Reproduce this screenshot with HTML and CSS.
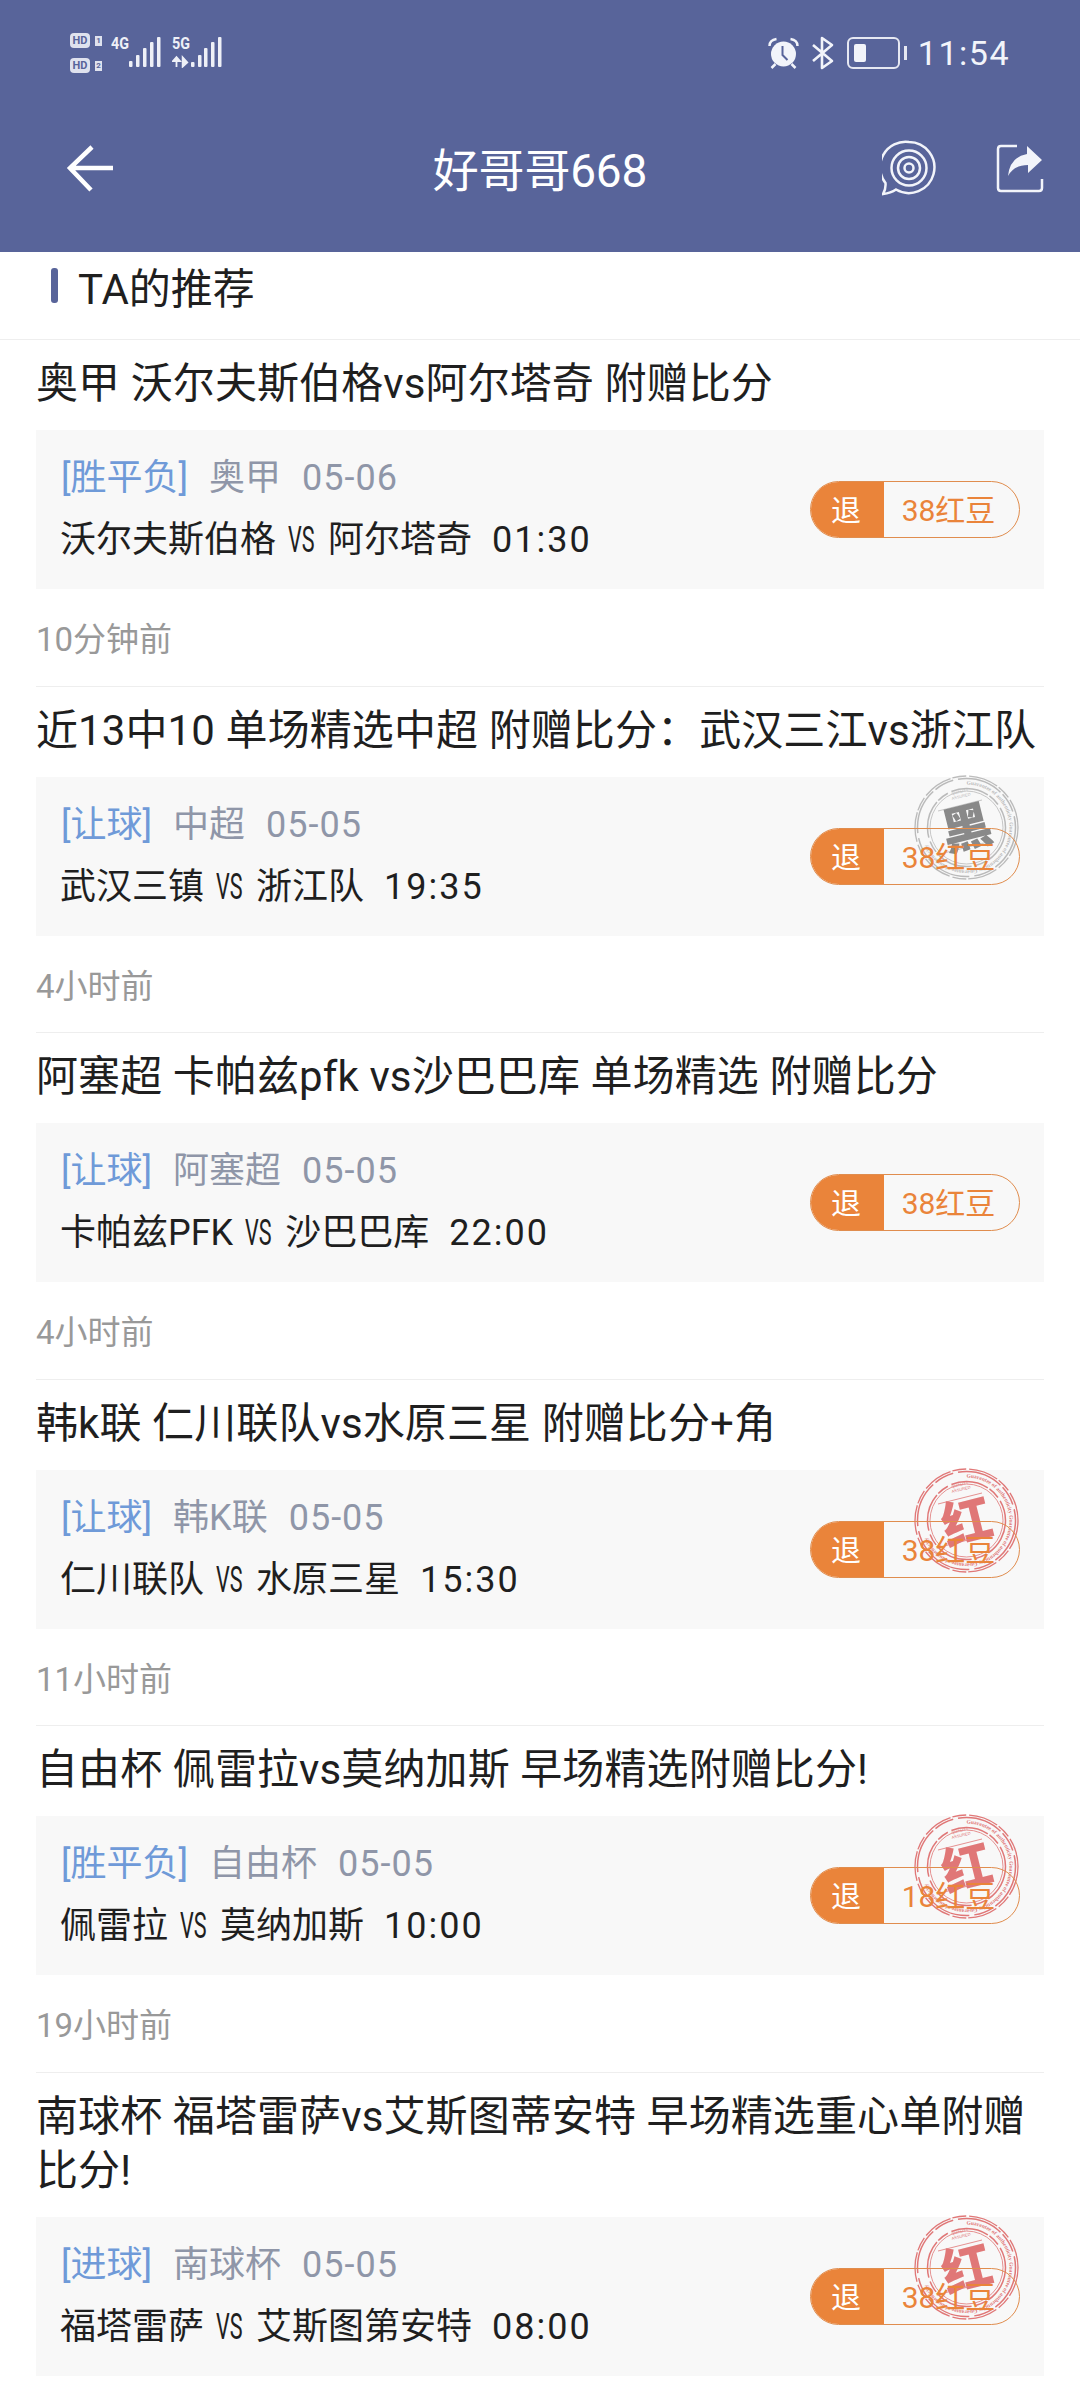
FILE: index.html
```html
<!DOCTYPE html>
<html>
<head>
  <meta charset="UTF-8">
  <title>好哥哥668</title>
  <link rel="stylesheet" href="styles.css">
</head>
<body>
  <!-- Shared stamp artwork -->
  <svg class="defs" width="0" height="0">
    <defs>
      <path id="ring-path" d="M52.500 9.500a43 43 0 1 1-.01 0"/>
      <symbol id="stamp-ring" viewBox="0 0 105 105">
        <g fill="none" stroke="currentColor">
          <circle cx="52.500" cy="52.500" r="51.500" stroke-width="1.300" stroke-dasharray="30 2 14 3"/>
          <circle cx="52.500" cy="52.500" r="49" stroke-width="1.500" stroke-dasharray="46 3 20 5"/>
          <circle cx="52.500" cy="52.500" r="39" stroke-width="1.500" stroke-dasharray="38 2 12 4"/>
          <circle cx="52.500" cy="52.500" r="36.500" stroke-width=".8"/>
          <path d="M24 36l44-11M30 78l44-11" stroke-width=".8"/>
        </g>
        <text class="stamp-ring-text"><textPath href="#ring-path">Guarantee of authenticity  Guarantee of authenticity  Guarantee of authenticity</textPath></text>
        <text class="stamp-small" x="38" y="20" transform="rotate(-14 38 20)">QUALITY</text>
        <text class="stamp-small" x="38" y="25" transform="rotate(-14 38 25)">ASSURED</text>
      </symbol>
    </defs>
  </svg>

  <header class="top">
    <div class="status-bar">
      <div class="status-left">
        <div class="sims">
          <div class="sim"><span class="hd">HD</span><span class="sim-no">1</span></div>
          <div class="sim"><span class="hd">HD</span><span class="sim-no">2</span></div>
        </div>
        <svg width="50" height="35" viewBox="0 0 50 35">
          <text class="net" x="0" y="16" textLength="18" lengthAdjust="spacingAndGlyphs">4G</text>
          <g fill="#eef0f7">
            <rect x="18" y="28" width="3.500" height="6" rx="1"/>
            <rect x="25" y="22" width="3.500" height="12" rx="1"/>
            <rect x="32" y="15" width="3.500" height="19" rx="1"/>
            <rect x="39" y="9" width="3.500" height="25" rx="1"/>
            <rect x="46" y="4" width="3.500" height="30" rx="1"/>
          </g>
        </svg>
        <svg width="50" height="35" viewBox="0 0 50 35">
          <text class="net" x="0" y="16" textLength="18" lengthAdjust="spacingAndGlyphs">5G</text>
          <path d="M4.500 24v10M1 28l3.500-4 3.500 4z" stroke="#eef0f7" stroke-width="1.800" fill="#eef0f7"/>
          <path d="M10.500 24v10l5-4.500z" stroke="#eef0f7" stroke-width="1.500" fill="#eef0f7"/>
          <g fill="#eef0f7">
            <rect x="19" y="29" width="3.500" height="5" rx="1"/>
            <rect x="26" y="22" width="3.500" height="12" rx="1"/>
            <rect x="32" y="15" width="3.500" height="19" rx="1"/>
            <rect x="39" y="9" width="3.500" height="25" rx="1"/>
            <rect x="46" y="4" width="3.500" height="30" rx="1"/>
          </g>
        </svg>
      </div>
      <div class="status-right">
        <svg width="31" height="32" viewBox="0 0 30 32">
          <circle cx="15" cy="17" r="12.500" fill="#f2f4fa"/>
          <path d="M14 9v9l5 5" fill="none" stroke="#58649a" stroke-width="2"/>
          <path d="M1 9q0-6 7-7M29 9q0-6-7-7" fill="none" stroke="#f2f4fa" stroke-width="2.500"/>
          <path d="M7 27l-4 4M23 27l4 4" stroke="#f2f4fa" stroke-width="2.500"/>
        </svg>
        <svg class="bt" width="24" height="34" viewBox="0 0 24 34">
          <path d="M2 9l19 16-10 7V2l10 7L2 25" fill="none" stroke="#f2f4fa" stroke-width="2.600" stroke-linejoin="round"/>
        </svg>
        <div class="battery"><span class="battery-level"></span></div>
        <span class="clock">11:54</span>
      </div>
    </div>
    <nav class="nav">
      <svg width="48" height="48" viewBox="0 0 48 48">
        <path d="M47 24H5M26 3L4 24l21 22" fill="none" stroke="#fff" stroke-width="4.500"/>
      </svg>
      <h1 class="nav-title">好哥哥668</h1>
      <div class="nav-actions">
        <svg width="54" height="56" viewBox="0 0 54 56">
          <path d="M27 2a25.500 25.500 0 1 1-13 47.500Q9 53 1 54q3-5 2.500-11A25.500 25.500 0 0 1 27 2z" fill="none" stroke="#f2f4fa" stroke-width="2.500"/>
          <circle cx="27" cy="28" r="17.500" fill="none" stroke="#f2f4fa" stroke-width="2.500"/>
          <circle cx="27" cy="28" r="11" fill="none" stroke="#f2f4fa" stroke-width="2.500"/>
          <circle cx="27" cy="28" r="4.500" fill="none" stroke="#f2f4fa" stroke-width="2.500"/>
        </svg>
        <svg width="48" height="50" viewBox="0 0 48 50">
          <path d="M11 3H5Q2 3 2 6v39q0 3 3 3h38q3 0 3-3v-9M11 3h10" fill="none" stroke="#f2f4fa" stroke-width="2.500"/>
          <path d="M31 3l15 14-14 13v-8q-14 0-20 11 2-19 19-22z" fill="#f2f4fa"/>
        </svg>
      </div>
    </nav>
  </header>

  <section class="section-head">
    <span class="section-mark"></span>
    <h2 class="section-title">TA的推荐</h2>
  </section>

  <div class="list">
    <div class="item">
      <h3 class="item-title">奥甲 沃尔夫斯伯格vs阿尔塔奇 附赠比分</h3>
      <div class="card">
        <div class="card-info">
          <div class="meta"><span class="play">[胜平负]</span><span>奥甲</span><span class="date">05-06</span></div>
          <div class="match"><span>沃尔夫斯伯格</span><span class="vs">VS</span><span>阿尔塔奇</span><span class="kick">01:30</span></div>
        </div>
        <div class="price"><span class="refund">退</span><span class="beans">38红豆</span></div>
      </div>
      <div class="time">10分钟前</div>
    </div>

    <div class="item">
      <h3 class="item-title">近13中10 单场精选中超 附赠比分：武汉三江vs浙江队</h3>
      <div class="card">
        <div class="card-info">
          <div class="meta"><span class="play">[让球]</span><span>中超</span><span class="date">05-05</span></div>
          <div class="match"><span>武汉三镇</span><span class="vs">VS</span><span>浙江队</span><span class="kick">19:35</span></div>
        </div>
        <svg class="stamp stamp-black" width="105" height="105" viewBox="0 0 105 105">
          <use href="#stamp-ring"/>
          <text class="stamp-char" x="52.500" y="71" transform="rotate(-14 52.500 52.500)">黑</text>
        </svg>
        <div class="price"><span class="refund">退</span><span class="beans">38红豆</span></div>
      </div>
      <div class="time">4小时前</div>
    </div>

    <div class="item">
      <h3 class="item-title">阿塞超 卡帕兹pfk vs沙巴巴库 单场精选 附赠比分</h3>
      <div class="card">
        <div class="card-info">
          <div class="meta"><span class="play">[让球]</span><span>阿塞超</span><span class="date">05-05</span></div>
          <div class="match"><span>卡帕兹PFK</span><span class="vs">VS</span><span>沙巴巴库</span><span class="kick">22:00</span></div>
        </div>
        <div class="price"><span class="refund">退</span><span class="beans">38红豆</span></div>
      </div>
      <div class="time">4小时前</div>
    </div>

    <div class="item">
      <h3 class="item-title">韩k联 仁川联队vs水原三星 附赠比分+角</h3>
      <div class="card">
        <div class="card-info">
          <div class="meta"><span class="play">[让球]</span><span>韩K联</span><span class="date">05-05</span></div>
          <div class="match"><span>仁川联队</span><span class="vs">VS</span><span>水原三星</span><span class="kick">15:30</span></div>
        </div>
        <svg class="stamp stamp-red" width="105" height="105" viewBox="0 0 105 105">
          <use href="#stamp-ring"/>
          <text class="stamp-char" x="52.500" y="72" transform="rotate(-14 52.500 52.500)">红</text>
        </svg>
        <div class="price"><span class="refund">退</span><span class="beans">38红豆</span></div>
      </div>
      <div class="time">11小时前</div>
    </div>

    <div class="item">
      <h3 class="item-title">自由杯 佩雷拉vs莫纳加斯 早场精选附赠比分!</h3>
      <div class="card">
        <div class="card-info">
          <div class="meta"><span class="play">[胜平负]</span><span>自由杯</span><span class="date">05-05</span></div>
          <div class="match"><span>佩雷拉</span><span class="vs">VS</span><span>莫纳加斯</span><span class="kick">10:00</span></div>
        </div>
        <svg class="stamp stamp-red" width="105" height="105" viewBox="0 0 105 105">
          <use href="#stamp-ring"/>
          <text class="stamp-char" x="52.500" y="72" transform="rotate(-14 52.500 52.500)">红</text>
        </svg>
        <div class="price"><span class="refund">退</span><span class="beans">18红豆</span></div>
      </div>
      <div class="time">19小时前</div>
    </div>

    <div class="item item-last">
      <h3 class="item-title">南球杯 福塔雷萨vs艾斯图蒂安特 早场精选重心单附赠比分!</h3>
      <div class="card">
        <div class="card-info">
          <div class="meta"><span class="play">[进球]</span><span>南球杯</span><span class="date">05-05</span></div>
          <div class="match"><span>福塔雷萨</span><span class="vs">VS</span><span>艾斯图第安特</span><span class="kick">08:00</span></div>
        </div>
        <svg class="stamp stamp-red" width="105" height="105" viewBox="0 0 105 105">
          <use href="#stamp-ring"/>
          <text class="stamp-char" x="52.500" y="72" transform="rotate(-14 52.500 52.500)">红</text>
        </svg>
        <div class="price"><span class="refund">退</span><span class="beans">38红豆</span></div>
      </div>
    </div>
  </div>
</body>
</html>
```

FILE: styles.css
```css
/* Global styles */
* {
  margin: 0;
  padding: 0;
  box-sizing: border-box;
}

:root {
  --brand-color: #58649a;
  --text-color: #1f1f1f;
  --border-color: #eeeeee;
  --card-bg: #f8f8f8;
  --orange: #ea843a;
  --blue: #6f9ad8;
}

html, body {
  height: 2400px;
  overflow: hidden;
}

body {
  width: 1080px;
  background-color: #ffffff;
  color: var(--text-color);
  font-family: Roboto, "Noto Sans CJK SC", sans-serif;
}

.defs {
  position: absolute;
}

/* Header styles */
.top {
  height: 252px;
  background-color: var(--brand-color);
  color: #ffffff;
}

.status-bar {
  height: 94px;
  padding: 33px 70px 0 70px;
  display: flex;
  justify-content: space-between;
}

.status-left {
  display: flex;
  gap: 9px;
  height: 40px;
}

.sims {
  display: flex;
  flex-direction: column;
  gap: 10px;
  width: 32px;
}

.sim {
  display: flex;
  align-items: center;
  gap: 5px;
  height: 15px;
}

.hd {
  width: 20px;
  height: 15px;
  border-radius: 4px;
  background-color: #dfe2ee;
  color: var(--brand-color);
  font-size: 11px;
  font-weight: 700;
  line-height: 15px;
  text-align: center;
}

.sim-no {
  width: 7px;
  height: 10px;
  background-color: #dfe2ee;
  color: var(--brand-color);
  font-size: 8px;
  font-weight: 700;
  line-height: 10px;
  text-align: center;
}

.net {
  font-family: Roboto, sans-serif;
  font-size: 16px;
  font-weight: 700;
  fill: #eef0f7;
}

.status-left svg + svg {
  margin-left: 2px;
}

.status-right {
  display: flex;
  align-items: flex-start;
  gap: 12px;
  height: 40px;
  margin-top: 4px;
}

.bt {
  margin-top: -1px;
}

.battery {
  position: relative;
  width: 53px;
  height: 32px;
  margin-right: 6px;
  padding: 5px 5px;
  border: 2px solid #e6e8f2;
  border-radius: 6px;
}

.battery::after {
  content: "";
  position: absolute;
  right: -9px;
  top: 7px;
  width: 3px;
  height: 14px;
  background-color: #e6e8f2;
}

.battery-level {
  display: block;
  width: 12px;
  height: 18px;
  border-radius: 2px;
  background-color: #f2f4fa;
}

.clock {
  font-size: 34px;
  line-height: 32px;
  letter-spacing: 1.500px;
  color: #f2f4fa;
}

.nav {
  height: 148px;
  padding: 0 36px 0 66px;
  display: flex;
  align-items: center;
  justify-content: space-between;
  position: relative;
}

.nav-title {
  position: absolute;
  left: 0;
  right: 0;
  margin-top: -3px;
  text-align: center;
  font-size: 46px;
  font-weight: 400;
  letter-spacing: -.2px;
}

.nav-actions {
  display: flex;
  align-items: center;
  gap: 60px;
}

/* Section title */
.section-head {
  height: 88px;
  padding: 16px 0 0 51px;
  display: flex;
  align-items: flex-start;
  border-bottom: 1px solid var(--border-color);
}

.section-mark {
  width: 7px;
  height: 35px;
  border-radius: 3px;
  background-color: var(--brand-color);
}

.section-title {
  margin: 3px 0 0 20px;
  font-size: 42px;
  font-weight: 400;
  line-height: 38px;
}

/* List items */
.list {
  padding: 0 36px;
}

.item {
  border-bottom: 1px solid var(--border-color);
}

.item-last {
  border-bottom: none;
}

.item-title {
  padding-top: 17px;
  margin-bottom: 19px;
  font-size: 42px;
  font-weight: 400;
  line-height: 54px;
  letter-spacing: .1px;
}

.card {
  position: relative;
  height: 159px;
  padding: 0 24px 0 25px;
  display: flex;
  align-items: center;
  justify-content: space-between;
  background-color: var(--card-bg);
}

.card-info {
  padding-bottom: 1px;
}

.meta {
  display: flex;
  gap: 21px;
  font-size: 36px;
  line-height: 40px;
  color: #8f96a8;
}

.play {
  color: var(--blue);
}

.date {
  letter-spacing: 1px;
}

.match {
  display: flex;
  margin: 22px 0 0 -1px;
  font-size: 36px;
  line-height: 40px;
}

.vs {
  width: 28px;
  margin: 0 12px;
  transform: scaleX(.6);
  transform-origin: left center;
}

.kick {
  margin-left: 20px;
  letter-spacing: 2px;
}

/* Price pill */
.price {
  position: relative;
  width: 210px;
  height: 57px;
  display: flex;
  font-size: 30px;
  line-height: 57px;
  border: 1.500px solid #e08d4e;
  border-radius: 29px;
  overflow: hidden;
}

.refund {
  width: 73px;
  padding-right: 3px;
  background-color: var(--orange);
  color: #ffffff;
  text-align: center;
}

.beans {
  flex: 1;
  padding-right: 6px;
  color: var(--orange);
  text-align: center;
}

/* Result stamp, lies over the card corner */
.stamp {
  position: absolute;
  top: -2px;
  right: 25px;
  opacity: .9;
}

.stamp-red {
  color: #de6a6a;
}

.stamp-black {
  color: #7d7d7d;
}

.stamp-black use {
  opacity: .55;
}

.stamp-ring-text {
  font-family: "Liberation Serif", serif;
  font-size: 5.500px;
  font-weight: 700;
  fill: currentColor;
}

.stamp-small {
  font-family: "Liberation Sans", sans-serif;
  font-size: 4px;
  fill: currentColor;
}

.stamp-char {
  font-family: "Noto Sans CJK SC", sans-serif;
  font-size: 50px;
  font-weight: 900;
  text-anchor: middle;
  fill: currentColor;
}

.time {
  height: 96.500px;
  padding-top: 5px;
  font-size: 33px;
  line-height: 92px;
  color: #999999;
}
```
